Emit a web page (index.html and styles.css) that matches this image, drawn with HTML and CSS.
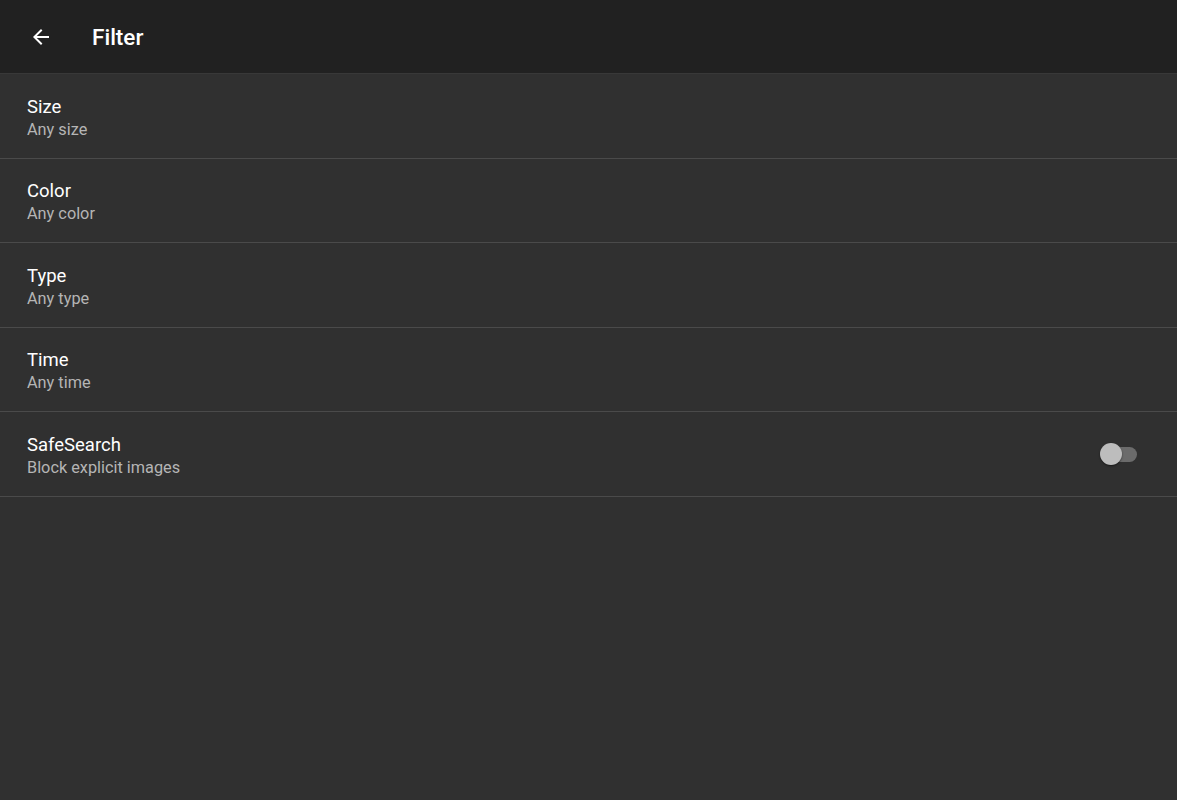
FILE: index.html
```html
<!DOCTYPE html>
<html>
<head>
<meta charset="utf-8">
<link rel="stylesheet" href="styles.css">
</head>
<body>
<header class="appbar">
  <svg class="back" width="24" height="24" viewBox="0 0 24 24"><path d="M20 11H7.83l5.59-5.59L12 4l-8 8 8 8 1.41-1.41L7.83 13H20v-2z" fill="#fff"/></svg>
  <h1 class="title">Filter</h1>
</header>
<main class="list">
  <div class="row"><div class="texts"><div class="primary">Size</div><div class="secondary">Any size</div></div></div>
  <div class="row"><div class="texts"><div class="primary">Color</div><div class="secondary">Any color</div></div></div>
  <div class="row"><div class="texts"><div class="primary">Type</div><div class="secondary">Any type</div></div></div>
  <div class="row"><div class="texts"><div class="primary">Time</div><div class="secondary">Any time</div></div></div>
  <div class="row"><div class="texts"><div class="primary">SafeSearch</div><div class="secondary">Block explicit images</div></div>
    <div class="switch"><div class="track"></div><div class="thumb"></div></div>
  </div>
</main>
</body>
</html>
```
FILE: styles.css
```css
html, body {
  margin: 0;
  padding: 0;
  background: #303030;
  font-family: Roboto, "Liberation Sans", sans-serif;
  height: 100%;
}
.appbar {
  background: #212121;
  display: flex;
  align-items: center;
  padding-left: 29px;
  border-bottom: 1px solid #383838;
  box-sizing: border-box;
  height: 74px;
}
.back {
  display: block;
}
.title {
  margin: 0 0 0 39px;
  color: #fff;
  font-size: 22.5px;
  font-weight: 500;
}
.list {
  display: flex;
  flex-direction: column;
}
.row {
  height: 83.5px;
  border-bottom: 1px solid #4a4a4a;
  display: flex;
  align-items: center;
  padding: 0 40px 0 27px;
  justify-content: space-between;
}
.texts {
  display: flex;
  flex-direction: column;
  padding-top: 4px;
}
.primary {
  color: #fff;
  font-size: 18.5px;
  line-height: 24px;
}
.secondary {
  color: #b5b5b5;
  font-size: 16.3px;
  line-height: 22px;
}
.switch {
  position: relative;
  width: 38px;
  height: 22px;
}
.track {
  position: absolute;
  left: 2px;
  right: 0;
  top: 4px;
  height: 15px;
  border-radius: 8px;
  background: #6b6b6b;
}
.thumb {
  position: absolute;
  left: 1px;
  top: 0;
  width: 22px;
  height: 22px;
  border-radius: 50%;
  background: #bdbdbd;
  box-shadow: 0 1px 2px rgba(0,0,0,0.5);
}
```
